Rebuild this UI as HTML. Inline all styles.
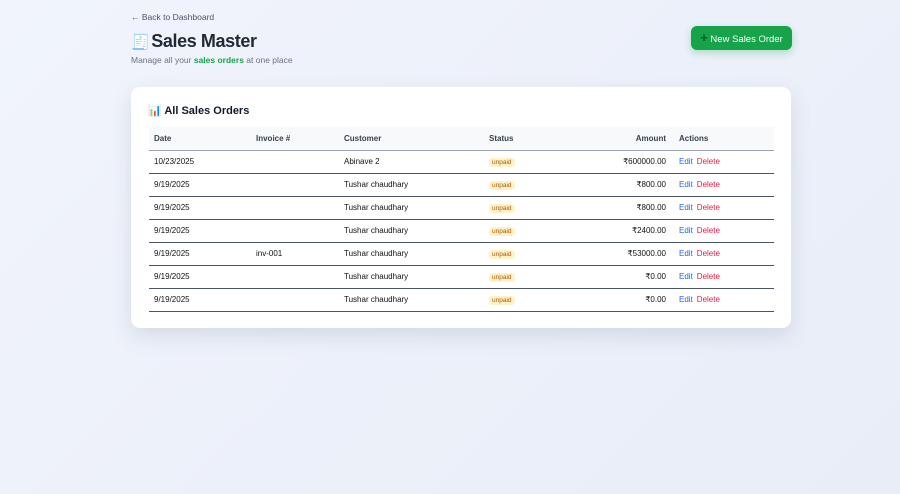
<!DOCTYPE html>
<html><head><style>
*{margin:0;padding:0;box-sizing:border-box}
body{width:900px;height:494px;background:linear-gradient(135deg,#f1f4fb,#e8edf8);font-family:"Liberation Sans",sans-serif;position:relative;overflow:hidden;color:#111827}
.back{position:absolute;left:131px;top:12px;font-size:8.5px;color:#4b5563}
h1{position:absolute;left:131px;top:31px;font-size:18px;font-weight:700;color:#1f2937;letter-spacing:-0.4px}
h1 i{font-style:normal;font-size:15px;margin-right:2px}
.sub{position:absolute;left:131px;top:55px;font-size:8.5px;color:#6b7280}
.sub b{color:#16a34a}
.btn{position:absolute;left:691px;top:26px;width:101px;height:24px;background:#16a34a;border-radius:6px;color:#fff;font-size:9.5px;line-height:24px;text-align:center;box-shadow:0 3px 8px rgba(22,163,74,.3)}
.btn span{color:#14532d;font-weight:700;font-size:13px}
.card{position:absolute;left:131px;top:87px;width:660px;height:241px;background:#fff;border-radius:9px;box-shadow:0 8px 20px rgba(100,116,139,.18)}
.card h2{position:absolute;left:17px;top:17px;font-size:11px;font-weight:700}
table{position:absolute;left:18px;top:40px;width:625px;border-collapse:collapse;font-size:8px}
th{background:#f8f9fb;height:23px;text-align:left;font-weight:700;color:#374151;border-bottom:1px solid #9ca3af;padding-left:5px}
td{height:23px;padding-left:5px;border-bottom:1px solid #4b5563;color:#111}
.r{text-align:right;padding-right:8px}
.p{background:#fef3c7;color:#b45309;font-size:6.5px;padding:1px 3px;border-radius:3px}
.e{color:#2563eb}.d{color:#e11d48;margin-left:4px}
</style></head><body>
<div class="back">← Back to Dashboard</div>
<h1><i>🧾</i>Sales Master</h1>
<div class="sub">Manage all your <b>sales orders</b> at one place</div>
<div class="btn"><span>+</span> New Sales Order</div>
<div class="card"><h2>📊 All Sales Orders</h2>
<table>
<tr><th style="width:102px">Date</th><th style="width:88px">Invoice #</th><th style="width:145px">Customer</th><th style="width:60px">Status</th><th class="r" style="width:130px">Amount</th><th>Actions</th></tr>
<tr><td>10/23/2025</td><td></td><td>Abinave 2</td><td><span class="p">unpaid</span></td><td class="r">₹600000.00</td><td><span class="e">Edit</span><span class="d">Delete</span></td></tr>
<tr><td>9/19/2025</td><td></td><td>Tushar chaudhary</td><td><span class="p">unpaid</span></td><td class="r">₹800.00</td><td><span class="e">Edit</span><span class="d">Delete</span></td></tr>
<tr><td>9/19/2025</td><td></td><td>Tushar chaudhary</td><td><span class="p">unpaid</span></td><td class="r">₹800.00</td><td><span class="e">Edit</span><span class="d">Delete</span></td></tr>
<tr><td>9/19/2025</td><td></td><td>Tushar chaudhary</td><td><span class="p">unpaid</span></td><td class="r">₹2400.00</td><td><span class="e">Edit</span><span class="d">Delete</span></td></tr>
<tr><td>9/19/2025</td><td>inv-001</td><td>Tushar chaudhary</td><td><span class="p">unpaid</span></td><td class="r">₹53000.00</td><td><span class="e">Edit</span><span class="d">Delete</span></td></tr>
<tr><td>9/19/2025</td><td></td><td>Tushar chaudhary</td><td><span class="p">unpaid</span></td><td class="r">₹0.00</td><td><span class="e">Edit</span><span class="d">Delete</span></td></tr>
<tr><td>9/19/2025</td><td></td><td>Tushar chaudhary</td><td><span class="p">unpaid</span></td><td class="r">₹0.00</td><td><span class="e">Edit</span><span class="d">Delete</span></td></tr>
</table></div>
</body></html>
